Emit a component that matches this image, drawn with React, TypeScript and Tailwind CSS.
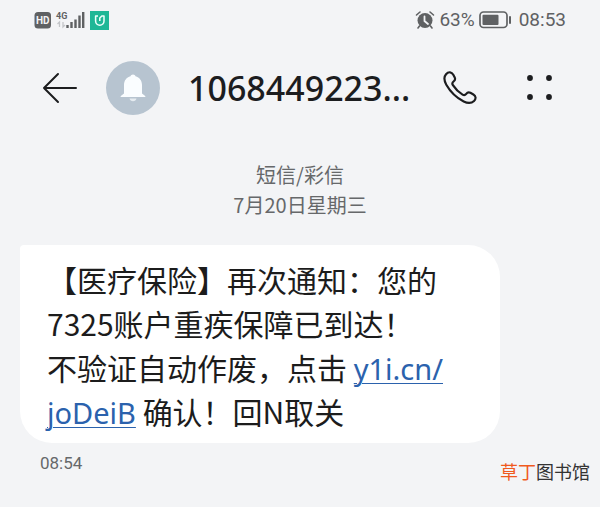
import React from 'react';

const dots = [
  { cx: 5, cy: 3 },
  { cx: 24, cy: 3 },
  { cx: 5, cy: 22 },
  { cx: 24, cy: 22 },
];

const StatusBar = () => {
  return (
    <div className="flex h-10 items-center justify-between pr-[34px] pl-8 text-[#5f6163]">
      <div className="flex items-center">
        <svg width="20" height="20" viewBox="0 0 20 20" aria-label="HD">
          <rect x="2.5" y="2" width="16.5" height="16.5" rx="3.5" fill="#5f6163" />
          <text
            x="10.8"
            y="14"
            textAnchor="middle"
            fontSize="10"
            fontWeight="700"
            fontFamily="Roboto, sans-serif"
            fill="#f3f4f6"
          >
            HD
          </text>
        </svg>
        <svg width="34" height="20" viewBox="0 0 34 20" aria-label="4G">
          <text
            x="4"
            y="9"
            fontSize="9"
            fontWeight="700"
            fontFamily="Roboto, sans-serif"
            fill="#5f6163"
          >
            4G
          </text>
          <path
            d="M7.5 17v-5l-2 2M11 12v5l2-2"
            fill="none"
            stroke="#c3c5c8"
            strokeWidth="1.3"
          />
          <path
            d="M15.5 18v-3M19.5 18v-6M23.5 18V9.5M27.5 18V5.5M31.2 18V2"
            fill="none"
            stroke="#5f6163"
            strokeWidth="2.4"
          />
        </svg>
        <svg width="24" height="20" viewBox="0 0 24 20" aria-hidden="true">
          <rect x="4" y="1" width="19" height="19" fill="#1fb796" />
          <path
            d="M12 6H9.6v5a4.2 4.2 0 0 0 8.4 0V6h-2.2L13.8 8v3"
            fill="none"
            stroke="#effffb"
            strokeWidth="1.5"
            strokeLinejoin="round"
          />
        </svg>
      </div>
      <div className="flex items-center font-['Roboto','Noto_Sans_CJK_SC',sans-serif] text-[19px] leading-6">
        <svg width="20" height="20" viewBox="0 0 20 20" aria-hidden="true">
          <circle cx="10" cy="10.5" r="7.5" fill="#5f6163" />
          <path
            d="M1.5 5 5 2M18.5 5 15 2M4.5 16 3 18M15.5 16l1.5 2"
            stroke="#5f6163"
            strokeWidth="1.6"
            strokeLinecap="round"
          />
          <path
            d="M9.5 6.5V11l3.5 3"
            fill="none"
            stroke="#f3f4f6"
            strokeWidth="1.8"
            strokeLinecap="round"
          />
        </svg>
        <span className="ml-1">63%</span>
        <svg className="ml-1" width="34" height="18" viewBox="0 0 34 18" aria-hidden="true">
          <rect
            x="1"
            y="1"
            width="27"
            height="15.5"
            rx="3.5"
            fill="none"
            stroke="#5f6163"
            strokeWidth="1.7"
          />
          <rect x="3.5" y="3.7" width="16" height="10.3" rx="1" fill="#5f6163" />
          <rect x="30" y="5" width="2" height="8" rx="1" fill="#5f6163" />
        </svg>
        <time className="ml-1.5">08:53</time>
      </div>
    </div>
  );
};

const Header = () => {
  return (
    <header className="flex h-24 items-center pr-12 pl-10 text-[#1c1d1f]">
      <button type="button" aria-label="返回">
        <svg width="38" height="32" viewBox="0 0 38 32" fill="none">
          <path
            d="M36 16H4M18 2 4 16l14 14"
            stroke="currentColor"
            strokeWidth="2"
            strokeLinecap="round"
            strokeLinejoin="round"
          />
        </svg>
      </button>
      <div className="ml-7 flex size-[54px] shrink-0 items-center justify-center rounded-full bg-[#b7c4d0]">
        <svg width="26" height="28" viewBox="0 0 26 28" fill="#fafdff" aria-hidden="true">
          <path d="M13 .5c-1.300 0-2.100.8-2.500 1.700C6.500 3.300 4 6.600 4 11v8.500L.8 22q-.8 1 .4 1h23.600q1.200 0 .4-1L22 19.500V11c0-4.400-2.500-7.700-6.500-8.800C15.100 1.300 14.300.5 13 .5z" />
          <path d="M9.500 24.500h7c-.5 1.700-1.700 2.800-3.500 2.800s-3-1.100-3.500-2.800z" opacity="0.7" />
        </svg>
      </div>
      <h1 className="ml-7 font-['Noto_Sans',sans-serif] text-[34px] leading-10 font-medium">
        1068449223...
      </h1>
      <div className="ml-auto flex shrink-0 items-center gap-12">
        <button type="button" aria-label="拨打电话">
          <svg width="34" height="34" viewBox="0 0 36 36" fill="none">
            <path
              d="M3.200 3.400c2.800-3.200 6-2.400 7.700.6l1.400 2.700c.9 1.800.5 3.200-1 4.200-1.700 1.200-1.900 2.300-.8 4.100 2.800 4.400 6.200 7.600 10.200 10 1.600 1 2.700.8 3.900-.8 1.200-1.600 2.700-2 4.400-1.100l3.200 1.800c2.800 1.600 3 4.600.7 6.800-2.900 2.700-7 2.500-11 .5C14.500 28.400 7.500 21.500 3.500 14.500 1 10 .8 6.200 3.200 3.400z"
              stroke="currentColor"
              strokeWidth="2.3"
              strokeLinejoin="round"
            />
          </svg>
        </button>
        <button type="button" aria-label="更多">
          <svg width="27" height="26" viewBox="0 0 27 26" fill="currentColor">
            {dots.map(({ cx, cy }, index) => (
              <circle key={index} cx={cx} cy={cy} r="2.9" />
            ))}
          </svg>
        </button>
      </div>
    </header>
  );
};

const Message = () => {
  return (
    <div className="mx-5 mt-[25px] w-4/5 rounded-[32px] rounded-tl bg-white pt-3 pr-6 pb-2.5 pl-[27px]">
      <p className="text-[30px] leading-[44px] whitespace-nowrap text-[#1c1c1c]">
        【医疗保险】再次通知：您的
        <br />
        7325账户重疾保障已到达！
        <br />
        不验证自动作废，点击{' '}
        <a
          href="#"
          className="font-['Noto_Sans',sans-serif] text-[29px] leading-none text-[#2b62ad] underline decoration-1 underline-offset-3"
        >
          y1i.cn/
          <br />
          joDeiB
        </a>{' '}
        确认！回N取关
      </p>
    </div>
  );
};

const App = () => {
  return (
    <main
      lang="zh-CN"
      className="min-h-screen bg-[#f3f4f6] font-['Noto_Sans_CJK_SC',sans-serif]"
    >
      <StatusBar />
      <Header />
      <div className="mt-6 text-center text-[20px] leading-[30px] text-[#66686a]">
        <p>短信/彩信</p>
        <p>7月20日星期三</p>
      </div>
      <Message />
      <footer className="flex items-start justify-between pr-2.5 pl-10">
        <time className="mt-2 font-['Roboto',sans-serif] text-[17px] leading-6 text-[#66686a]">
          08:54
        </time>
        <p className="mt-4 text-lg leading-6 text-[#333]">
          <span className="text-[#f05a1e]">草丁</span>图书馆
        </p>
      </footer>
    </main>
  );
};

export default App;
